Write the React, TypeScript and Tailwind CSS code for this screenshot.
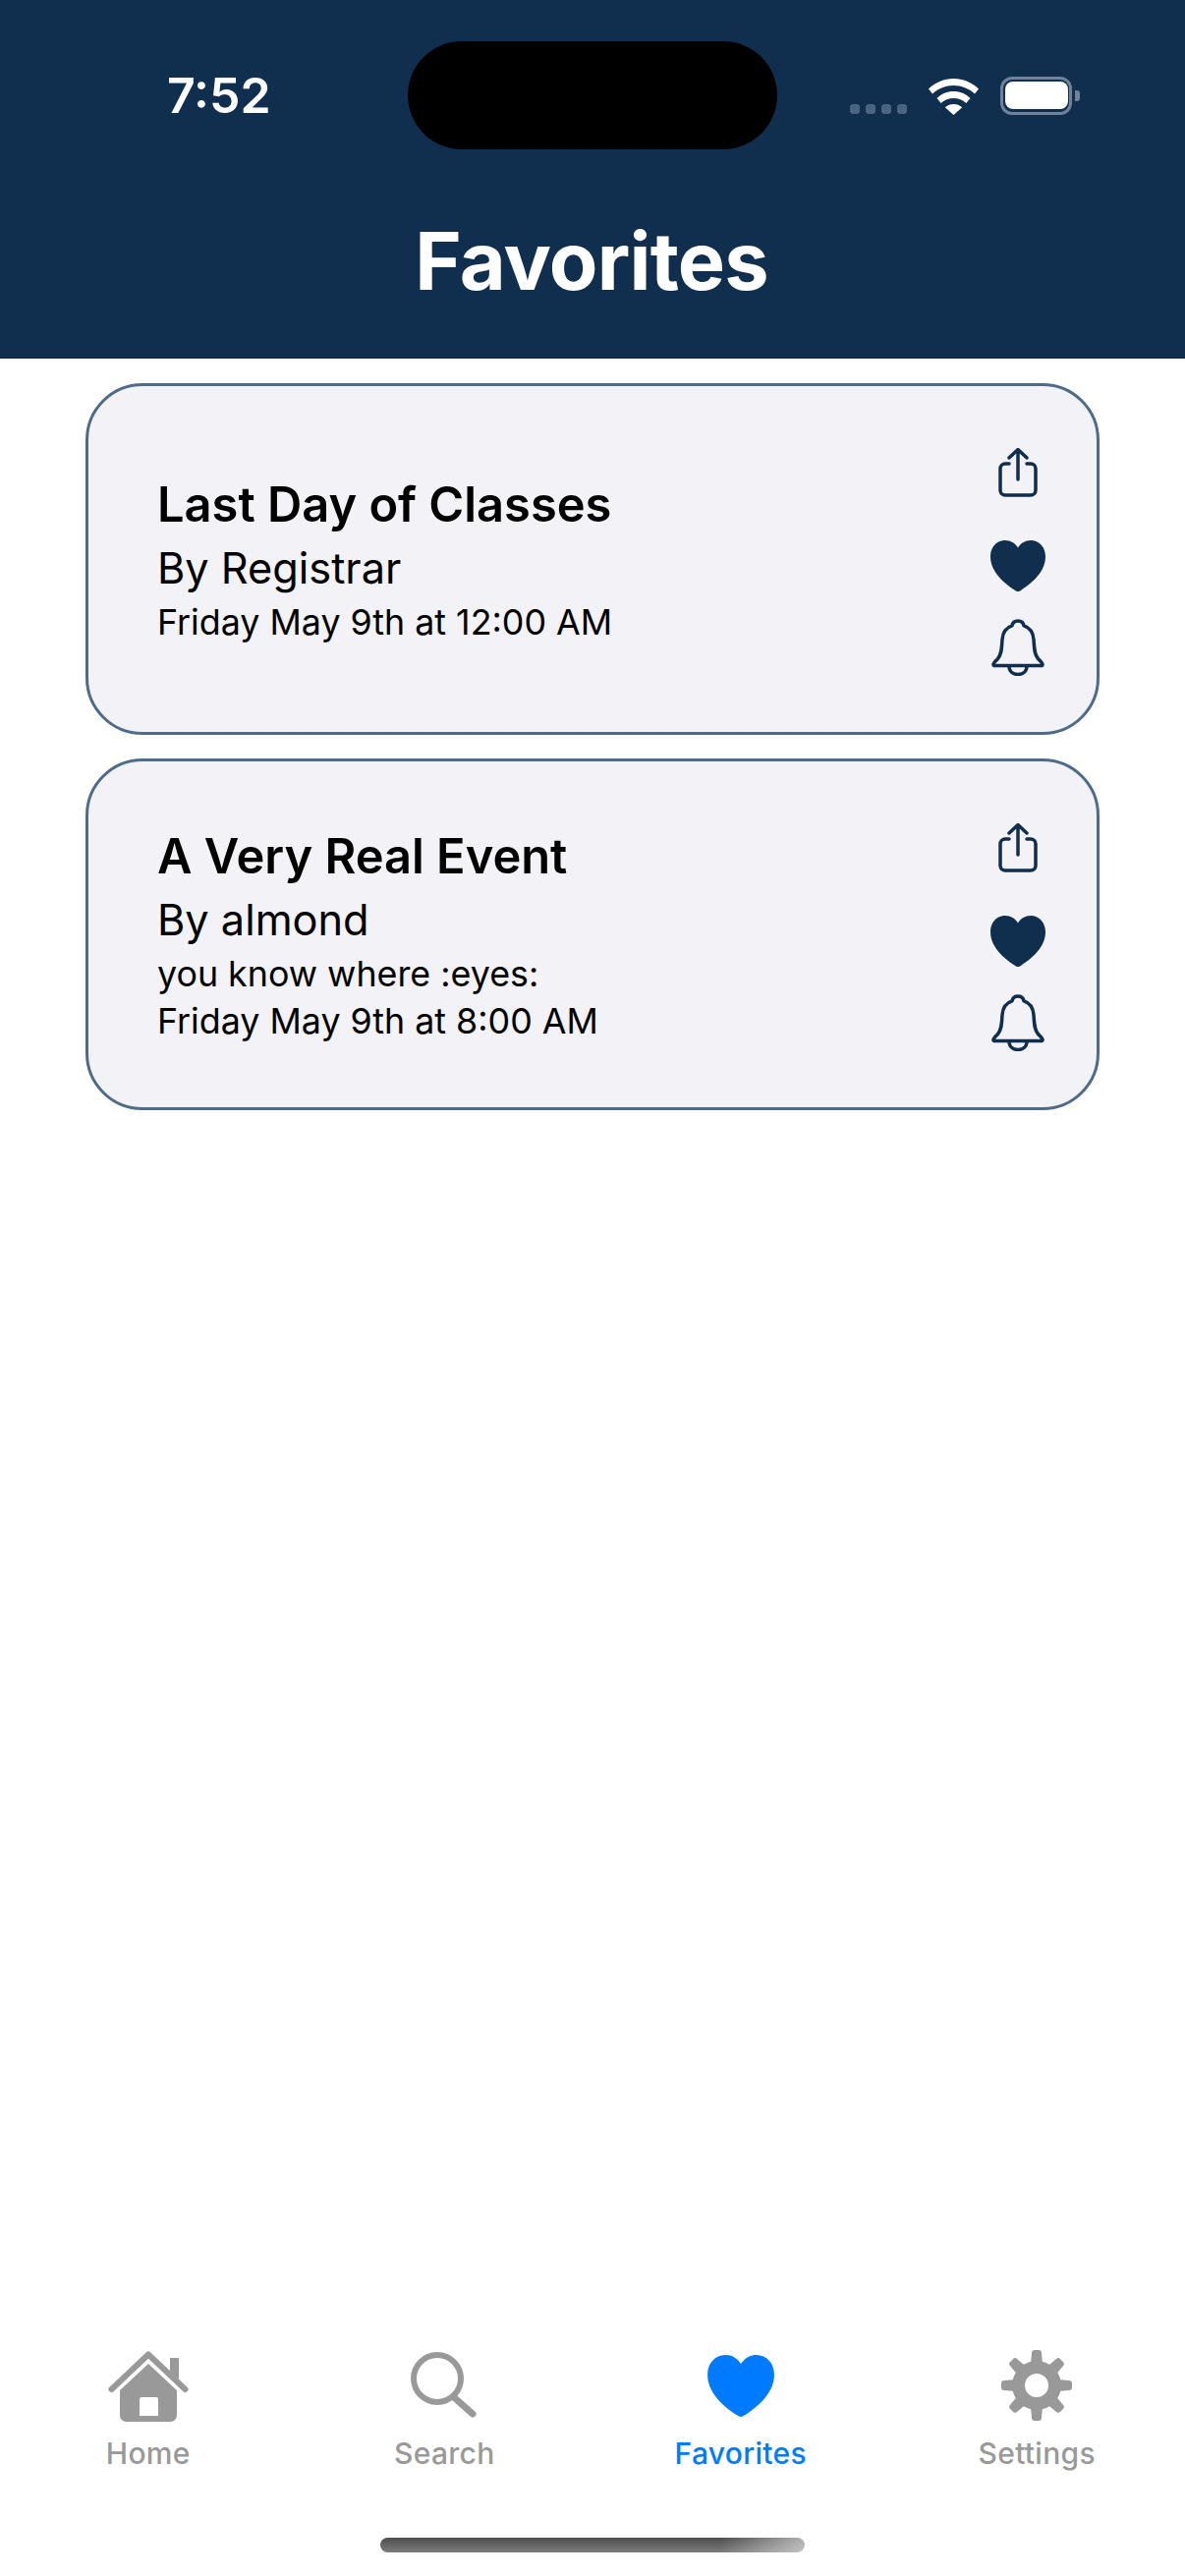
import * as React from "react";

const font = "font-['Inter','Noto_Sans',sans-serif]";

type Fav = { title: string; by: string; lines: string[] };

const favorites: Fav[] = [
  { title: "Last Day of Classes", by: "By Registrar", lines: ["Friday May 9th at 12:00 AM"] },
  { title: "A Very Real Event", by: "By almond", lines: ["you know where :eyes:", "Friday May 9th at 8:00 AM"] },
];

function ShareIcon() {
  return (
    <svg width="40" height="50" viewBox="0 0 40 50" fill="none" stroke="#102e4e" strokeWidth="3.500" strokeLinecap="round" strokeLinejoin="round">
      <path d="M11 16H7a5 5 0 0 0-5 5v22a5 5 0 0 0 5 5h26a5 5 0 0 0 5-5V21a5 5 0 0 0-5-5h-4" />
      <path d="M20 32V2M11 10l9-8.500 9 8.500" />
    </svg>
  );
}

function HeartIcon({ color, w, h }: { color: string; w: number; h: number }) {
  return (
    <svg width={w} height={h} viewBox="0 0 56 52" fill={color}>
      <path d="M28 52c-1 0-2-.6-3.600-1.600C12 42.300 0 31 0 16.500 0 7 6.500 0 15 0c5.700 0 10 2.800 13 7.500C31 2.800 35.300 0 41 0c8.500 0 15 7 15 16.500 0 14.500-12 25.800-24.400 33.900C30 51.400 29 52 28 52z" />
    </svg>
  );
}

function BellIcon() {
  return (
    <svg width="54" height="58" viewBox="0 0 54 58" fill="none" stroke="#102e4e" strokeWidth="3.500" strokeLinecap="round" strokeLinejoin="round">
      <path d="M27 2c3.500 0 5.500 2.200 6 4.800 6.500 2 9.500 7.500 10 14.200.6 8 .5 15 4.500 19.500 1.800 2 4 3.800 4.500 5.500.2 1-.4 1.500-1.500 1.500H3.500C2.400 47.500 1.800 47 2 46c.5-1.700 2.700-3.500 4.500-5.500 4-4.500 3.900-11.500 4.500-19.500.5-6.700 3.500-12.200 10-14.200C21.500 4.200 23.500 2 27 2z" />
      <path d="M18 48c0 5.500 4 8.500 9 8.500s9-3 9-8.500" />
    </svg>
  );
}

function HomeIcon() {
  return (
    <svg width="82" height="73" viewBox="0 0 82 73" fill="#999999">
      <path d="M41 14 70 41v25c0 4-2.500 7-7 7H19c-4.500 0-7-3-7-7V41L41 14zM32 50v17h19V50a2 2 0 0 0-2-2H34a2 2 0 0 0-2 2z" fillRule="evenodd" />
      <path d="M3.500 40 41 4.500 78.500 40" fill="none" stroke="#999999" strokeWidth="6" strokeLinecap="round" strokeLinejoin="round" />
      <path d="M63 8h8a1 1 0 0 1 1 1v21l-9-8.500z" />
    </svg>
  );
}

function SearchIcon() {
  return (
    <svg width="68" height="68" viewBox="0 0 68 68" fill="none" stroke="#999999" strokeLinecap="round">
      <circle cx="27" cy="27" r="24" strokeWidth="6" />
      <path d="M45 47 63 63" strokeWidth="7" />
    </svg>
  );
}

function GearIcon() {
  const teeth = [0, 45, 90, 135, 180, 225, 270, 315];
  return (
    <svg width="72" height="72" viewBox="0 0 72 72">
      <path fillRule="evenodd" fill="#999999" d="M36 11a25 25 0 1 0 0 50 25 25 0 0 0 0-50zm0 13a12 12 0 1 1 0 24 12 12 0 0 1 0-24z" />
      {teeth.map((deg) => (
        <path key={deg} d="M30 14 31 3a3 3 0 0 1 3-3h4a3 3 0 0 1 3 3l1 11z" fill="#999999" transform={`rotate(${deg} 36 36)`} />
      ))}
    </svg>
  );
}

function WifiIcon() {
  return (
    <svg width="51" height="37" viewBox="0 0 51 37" fill="#ffffff">
      <path d="M25.500 0C35 0 44 3.700 51 10.500l-4 5C41 10 33.500 7 25.500 7S10 10 4 15.500l-4-5C7 3.700 16 0 25.500 0z" />
      <path d="M25.500 13c6.500 0 12.500 2.500 17 7l-4.200 5c-3.500-3.300-8-5-12.800-5s-9.300 1.700-12.800 5l-4.200-5c4.500-4.500 10.500-7 17-7z" />
      <path d="M25.500 26c3.300 0 6.300 1.200 8.700 3.300L25.500 37l-8.700-7.700c2.400-2.100 5.400-3.300 8.700-3.300z" />
    </svg>
  );
}

function StatusBar() {
  return (
    <div className="flex h-[110px] items-center">
      <div className="w-[415px] pl-[170px]">
        <span className="text-[50px] leading-none font-semibold text-white">7:52</span>
      </div>
      <div className="h-[110px] w-[376px] rounded-[55px] bg-black" />
      <div className="flex flex-1 items-end pl-[74px]">
        <div className="mb-[1px] flex gap-[6px]">
          {[0, 1, 2, 3].map((i) => (
            <span key={i} className="h-[10px] w-[10px] rounded-[3px] bg-[#4a6380]" />
          ))}
        </div>
        <div className="ml-[22px]">
          <WifiIcon />
        </div>
        <div className="ml-[22px] flex items-center">
          <div className="flex h-[39px] w-[73px] items-center justify-center rounded-[12px] border-[3px] border-[#6f8299]">
            <div className="h-[28px] w-[64px] rounded-[8px] bg-white" />
          </div>
          <div className="ml-[3px] h-[11px] w-[5px] rounded-r-[3px] bg-[#6f8299]" />
        </div>
      </div>
    </div>
  );
}

function FavoriteCard({ item }: { item: Fav }) {
  return (
    <div className="flex h-[358px] items-center justify-between rounded-[58px] border-[3px] border-[#4f6b8a] bg-[#f2f2f7] pr-[52px] pl-[70px]">
      <div className="text-black">
        <p className="text-[48.800px] leading-[66px] font-semibold">{item.title}</p>
        <p className="text-[43.300px] leading-[62px]">{item.by}</p>
        {item.lines.map((line) => (
          <p key={line} className="text-[35.800px] leading-[48px]">
            {line}
          </p>
        ))}
      </div>
      <div className="flex h-full w-[56px] flex-col items-center pt-[63px]">
        <ShareIcon />
        <div className="mt-[44px]">
          <HeartIcon color="#102e4e" w={56} h={52} />
        </div>
        <div className="mt-[28px]">
          <BellIcon />
        </div>
      </div>
    </div>
  );
}

function TabItem({ label, active, children }: { label: string; active?: boolean; children: React.ReactNode }) {
  return (
    <div className="flex flex-col items-center">
      <div className="flex h-[74px] items-center justify-center">{children}</div>
      <span className={`mt-[14px] text-[30px] leading-[36px] font-medium tracking-[0.3px] ${active ? "text-[#007aff]" : "text-[#999999]"}`}>
        {label}
      </span>
    </div>
  );
}

export default function App() {
  return (
    <div className={`flex h-[2622px] w-[1206px] flex-col overflow-hidden bg-white ${font}`}>
      <header className="h-[365px] bg-[#102e4e] pt-[42px]">
        <StatusBar />
        <h1 className="mt-[64px] pr-[2px] text-center text-[81px] leading-[100px] font-bold tracking-[-0.8px] text-white">Favorites</h1>
      </header>

      <main className="flex flex-1 flex-col gap-[24px] px-[87px] pt-[25px]">
        {favorites.map((item) => (
          <FavoriteCard key={item.title} item={item} />
        ))}
      </main>

      <nav className="grid grid-cols-4">
        <TabItem label="Home">
          <HomeIcon />
        </TabItem>
        <TabItem label="Search">
          <SearchIcon />
        </TabItem>
        <TabItem label="Favorites" active>
          <HeartIcon color="#007aff" w={68} h={63} />
        </TabItem>
        <TabItem label="Settings">
          <GearIcon />
        </TabItem>
      </nav>

      <div className="flex justify-center pt-[68px] pb-[24px]">
        <div className="h-[15px] w-[432px] rounded-full bg-[linear-gradient(to_right,transparent_80%,rgba(255,255,255,0.55)),linear-gradient(to_bottom,#4c4c4c,#7c7c7c)]" />
      </div>
    </div>
  );
}
